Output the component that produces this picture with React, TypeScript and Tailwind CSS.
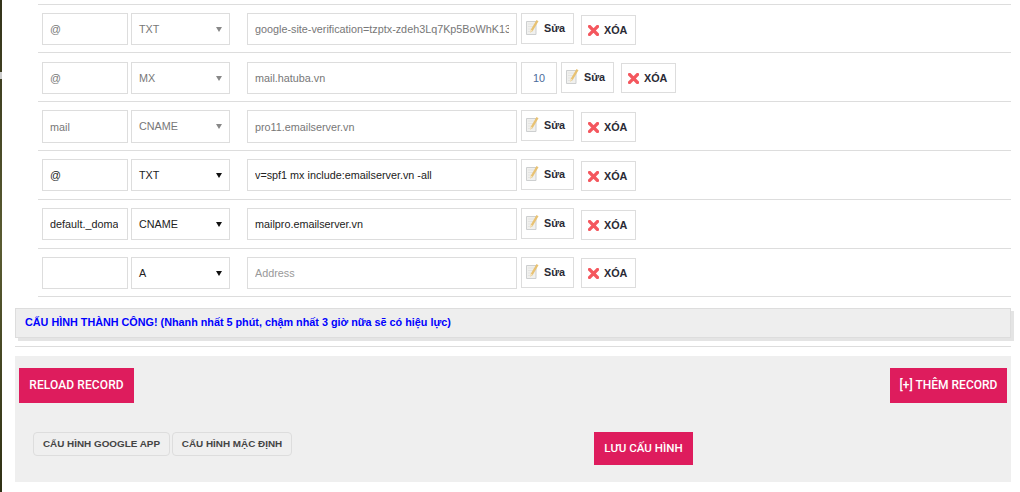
import React from 'react';

type DnsRecord = {
  host: string;
  type: string;
  value: string;
  priority?: string;
  muted?: boolean;
};

const RECORDS: DnsRecord[] = [
  { host: '@', type: 'TXT', value: 'google-site-verification=tzptx-zdeh3Lq7Kp5BoWhK13', muted: true },
  { host: '@', type: 'MX', value: 'mail.hatuba.vn', priority: '10', muted: true },
  { host: 'mail', type: 'CNAME', value: 'pro11.emailserver.vn', muted: true },
  { host: '@', type: 'TXT', value: 'v=spf1 mx include:emailserver.vn -all' },
  { host: 'default._domainkey', type: 'CNAME', value: 'mailpro.emailserver.vn' },
  { host: '', type: 'A', value: '' },
];

function EditIcon() {
  return (
    <svg width="13" height="15" viewBox="0 0 13 15" className="mb-[1px] shrink-0">
      <path d="M0.5 1.5h9.5v13h-9.5z" fill="#f0f0ee" stroke="#cdcfd0" strokeWidth="1" />
      <path d="M2 4h6M2 6.5h5M2 9h3M2 11.5h5" stroke="#e4e4e2" strokeWidth="1" />
      <path d="M10.5 0l2 1.2-5.5 9.3-2.7 2.2 0.6-3.2z" fill="#e8c273" />
      <path d="M4.4 9.5l2.2 1-2.6 2.2z" fill="#f5e4bd" />
    </svg>
  );
}

function DeleteIcon() {
  return (
    <svg width="11" height="11" viewBox="0 0 11 11" className="shrink-0">
      <path d="M1.5 1.5l8 8M9.5 1.5l-8 8" stroke="#f4575e" strokeWidth="3.2" strokeLinecap="square" />
    </svg>
  );
}

function RecordRow({ record }: { record: DnsRecord }) {
  const tone = record.muted ? 'text-[#777]' : 'text-[#222]';
  const field = 'h-[32px] border border-[#ddd] bg-white text-[10.8px] outline-none';
  return (
    <div className="flex h-[49px] items-start border-t border-[#ddd] pl-[4px] pt-[8px] first:h-[48px] last:h-[48px] [&:nth-child(2)]:pt-[9px] [&:nth-child(3)>div]:h-[33px] [&:nth-child(3)>input]:h-[33px]">
      <input
        readOnly
        value={record.host}
        className={`${field} ${tone} w-[86px] pl-[7px] pr-[9px]`}
      />
      <div className={`${field} ${tone} ml-[3px] flex w-[99px] items-center justify-between pl-[7px] pr-[7px]`}>
        {record.type}
        <svg width="6" height="5" viewBox="0 0 6 5">
          <path d="M0 0h6L3 5z" fill={record.muted ? '#888' : '#111'} />
        </svg>
      </div>
      <input
        readOnly
        value={record.value}
        placeholder="Address"
        className={`${field} ${tone} ml-[17px] w-[270px] px-[7px] placeholder:text-[#999]`}
      />
      {record.priority && (
        <input
          readOnly
          value={record.priority}
          className={`${field} ml-[4px] w-[36px] text-center text-[#4a6a9a]`}
        />
      )}
      <button className="ml-[4px] flex h-[31px] w-[53px] items-center gap-[5px] border border-[#ddd] bg-white pb-[1px] pl-[4px] text-[10.8px] font-bold text-[#2a2a35]">
        <EditIcon />
        Sửa
      </button>
      <button className="ml-[7px] mt-[2px] flex h-[30px] w-[55px] items-center gap-[5px] border border-[#ddd] bg-white pl-[6px] text-[10.8px] font-bold text-[#2a2a35] [div:nth-child(2)>&]:mt-[1px] [div:last-child>&]:mt-[1px]">
        <DeleteIcon />
        XÓA
      </button>
    </div>
  );
}

export default function App() {
  return (
    <div className="flex h-[492px] w-[1020px] overflow-hidden bg-white font-['Liberation_Sans',sans-serif]">
      <div className="w-[2px] shrink-0 bg-gradient-to-b from-[#33331a] via-[#5a5c32] to-[#2f3014] pt-[72px]">
        <div className="h-[7px] bg-[#ccc]" />
      </div>

      <div className="ml-[13px] w-[996px] pt-[4px]">
        {/* Records table */}
        <div className="ml-[23px] border-b border-[#ddd]">
          {RECORDS.map((record, i) => (
            <RecordRow key={i} record={record} />
          ))}
        </div>

        {/* Status */}
        <div className="mt-[11px] flex h-[30px] items-center border border-[#ddd] bg-[#eee] pb-[1px] pl-[9px] text-[10.8px] font-bold text-[#0000ff] shadow-[3px_3px_0_#e4e4e4]">
          CẤU HÌNH THÀNH CÔNG! (Nhanh nhất 5 phút, chậm nhất 3 giờ nữa sẽ có hiệu lực)
        </div>

        <hr className="mt-[8px] border-t border-[#ddd]" />

        {/* Actions */}
        <div className="mt-[9px] h-[126px] bg-[#efefef] px-[4px] pt-[12px]">
          <div className="flex justify-between">
            <button className="h-[35px] w-[115px] bg-[#de1c5d] pb-[1px] font-['Roboto',sans-serif] text-[12px] font-medium tracking-[0.1px] text-white">
              RELOAD RECORD
            </button>
            <button className="h-[35px] w-[117px] bg-[#de1c5d] pb-[1px] font-['Roboto',sans-serif] text-[12px] font-medium text-white">
              [+] THÊM RECORD
            </button>
          </div>
          <div className="mt-[29px] flex items-start pl-[14px]">
            <button className="h-[24px] w-[137px] rounded-[4px] border border-[#ddd] text-[9.9px] font-bold text-[#444]">
              CẤU HÌNH GOOGLE APP
            </button>
            <button className="ml-[2px] h-[24px] w-[120px] rounded-[4px] border border-[#ddd] text-[9.9px] font-bold text-[#444]">
              CẤU HÌNH MẶC ĐỊNH
            </button>
            <button className="ml-[302px] h-[33px] w-[99px] bg-[#de1c5d] font-['Roboto',sans-serif] text-[11.6px] font-medium text-white">
              LƯU CẤU HÌNH
            </button>
          </div>
        </div>
      </div>
    </div>
  );
}
